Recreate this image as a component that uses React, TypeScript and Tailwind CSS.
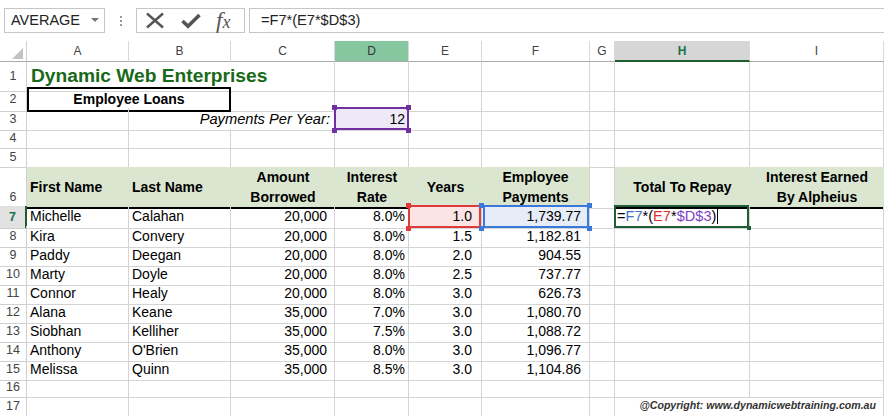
import React from "react";

const GRID =
  "grid grid-cols-[27px_102px_102px_104px_74px_73px_108px_25px_135px_134px]";
const C =
  "border-r border-b border-[#d4d4d4] flex items-center overflow-visible whitespace-nowrap";
const RH =
  "border-r border-b border-[#d0d0d0] flex items-center justify-center text-[12.5px] text-[#444]";
const CH =
  "border-r border-[#d9d9d9] border-b border-b-[#ababab] flex items-center justify-center text-[12px] text-[#444]";

type Row = [string, string, string, string, string, string];

const data: Row[] = [
  ["Kira", "Convery", "20,000", "8.0%", "1.5", "1,182.81"],
  ["Paddy", "Deegan", "20,000", "8.0%", "2.0", "904.55"],
  ["Marty", "Doyle", "20,000", "8.0%", "2.5", "737.77"],
  ["Connor", "Healy", "20,000", "8.0%", "3.0", "626.73"],
  ["Alana", "Keane", "35,000", "7.0%", "3.0", "1,080.70"],
  ["Siobhan", "Kelliher", "35,000", "7.5%", "3.0", "1,088.72"],
  ["Anthony", "O'Brien", "35,000", "8.0%", "3.0", "1,096.77"],
  ["Melissa", "Quinn", "35,000", "8.5%", "3.0", "1,104.86"],
];

function Corners({ color }: { color: string }) {
  const sq = "absolute w-[5px] h-[5px]";
  return (
    <>
      <span className={`${sq} -left-[3px] -top-[3px]`} style={{ background: color }} />
      <span className={`${sq} -right-[3px] -top-[3px]`} style={{ background: color }} />
      <span className={`${sq} -left-[3px] -bottom-[3px]`} style={{ background: color }} />
      <span className={`${sq} -right-[3px] -bottom-[3px]`} style={{ background: color }} />
    </>
  );
}

function Blank({ n, h }: { n: number; h: string }) {
  return (
    <div className={`${GRID} ${h}`}>
      <div className={RH}>{n}</div>
      <div className={C} />
      <div className={C} />
      <div className={C} />
      <div className={C} />
      <div className={C} />
      <div className={C} />
      <div className={C} />
      <div className={C} />
      <div className={C} />
    </div>
  );
}

export default function App() {
  return (
    <div className="w-[884px] h-[416px] overflow-hidden bg-white font-['Liberation_Sans',Arial,sans-serif] text-black text-[14px]">
      {/* Formula bar */}
      <div className="h-[41px] pt-[8px] flex items-start">
        <div className="ml-[4px] w-[101px] h-[25px] border border-[#c6c6c6] flex items-center justify-between pl-[6px] pr-[5px]">
          <span className="text-[14.5px] text-[#222]">AVERAGE</span>
          <svg width="8" height="5" viewBox="0 0 8 5">
            <polygon points="0,0 8,0 4,4" fill="#777" />
          </svg>
        </div>
        <div className="w-[31px] h-[25px] flex flex-col items-center justify-center gap-[2px]">
          <span className="w-[2px] h-[2px] bg-[#999]" />
          <span className="w-[2px] h-[2px] bg-[#999]" />
          <span className="w-[2px] h-[2px] bg-[#999]" />
        </div>
        <div className="w-[109px] h-[25px] border border-[#c6c6c6] flex items-center">
          <svg className="ml-[8px]" width="20" height="17" viewBox="0 0 20 17">
            <path d="M2 1.5 L18 15.5 M18 1.5 L2 15.5" stroke="#555" strokeWidth="2.4" />
          </svg>
          <svg className="ml-[16px]" width="20" height="16" viewBox="0 0 20 16">
            <path d="M1.5 8 L7 13.2 L18.5 2" stroke="#555" strokeWidth="3.6" fill="none" />
          </svg>
          <span className="ml-[15px] font-['Liberation_Serif',serif] italic text-[23px] leading-none text-[#555] -mt-[1px]">
            f<span className="text-[18px]">x</span>
          </span>
        </div>
        <div className="ml-[4px] flex-1 -mr-[2px] h-[25px] border border-[#c6c6c6] flex items-center pl-[11px] text-[14.6px] text-[#222]">
          =F7*(E7*$D$3)
        </div>
      </div>

      {/* Column headers */}
      <div className={`${GRID} h-[21px]`}>
        <div className="border-r border-[#d0d0d0] border-b border-b-[#ababab] flex items-end justify-end pr-[3px] pb-[2px]">
          <svg width="11" height="11" viewBox="0 0 11 11">
            <polygon points="11,0 11,11 0,11" fill="#c3c3c3" />
          </svg>
        </div>
        <div className={CH}>A</div>
        <div className={CH}>B</div>
        <div className={CH}>C</div>
        <div className="border-r border-[#d9d9d9] border-b border-b-[#ababab] flex items-center justify-center text-[12px] text-[#333] bg-[#86c79f]">
          D
        </div>
        <div className={CH}>E</div>
        <div className={CH}>F</div>
        <div className={CH}>G</div>
        <div className="border-r border-[#d9d9d9] border-b-2 border-b-[#1e5e30] flex items-center justify-center text-[12px] font-bold text-[#217346] bg-[#d6d6d6]">
          H
        </div>
        <div className={CH}>I</div>
      </div>

      {/* Row 1 */}
      <div className={`${GRID} h-[25px]`}>
        <div className={RH}>1</div>
        <div className={`${C} col-span-3 pl-[4px] text-[19.2px] font-bold text-[#176a17]`}>
          Dynamic Web Enterprises
        </div>
        <div className={C} />
        <div className={C} />
        <div className={C} />
        <div className={C} />
        <div className={C} />
        <div className={C} />
      </div>

      {/* Row 2 */}
      <div className={`${GRID} h-[21px]`}>
        <div className={RH}>2</div>
        <div className="col-span-2 border-2 border-black flex items-center justify-center font-bold text-[14px]">
          Employee Loans
        </div>
        <div className={C} />
        <div className={C} />
        <div className={C} />
        <div className={C} />
        <div className={C} />
        <div className={C} />
        <div className={C} />
      </div>

      {/* Row 3 */}
      <div className={`${GRID} h-[21px]`}>
        <div className={RH}>3</div>
        <div className={C} />
        <div className={`${C} col-span-2 justify-end pr-[4px] italic text-[14.7px]`}>Payments Per Year:</div>
        <div className={`${C} relative justify-end pr-[3px] bg-[#ede9f7]`}>
          <span className="absolute -left-[1px] -top-[1px] -right-[1px] bottom-0 border-2 border-[#7030a0]" />
          <Corners color="#7030a0" />
          <span className="relative">12</span>
        </div>
        <div className={C} />
        <div className={C} />
        <div className={C} />
        <div className={C} />
        <div className={C} />
      </div>

      <Blank n={4} h="h-[19px]" />
      <Blank n={5} h="h-[19px]" />

      {/* Row 6 */}
      <div className={`${GRID} h-[39px] font-bold text-[14px] leading-[20px]`}>
        <div className={`${RH} items-end pb-[1px] font-normal`}>6</div>
        <div className="bg-[#dae6d0] border-b-2 border-black flex items-center pl-[3px]">First Name</div>
        <div className="bg-[#dae6d0] border-b-2 border-black flex items-center pl-[3px]">Last Name</div>
        <div className="bg-[#dae6d0] border-b-2 border-black flex flex-col items-center justify-center text-center">
          <span>Amount</span>
          <span>Borrowed</span>
        </div>
        <div className="bg-[#dae6d0] border-b-2 border-black flex flex-col items-center justify-center text-center">
          <span>Interest</span>
          <span>Rate</span>
        </div>
        <div className="bg-[#dae6d0] border-b-2 border-black flex items-center justify-center">Years</div>
        <div className="bg-[#dae6d0] border-b-2 border-black border-r border-r-[#d4d4d4] flex flex-col items-center justify-center text-center">
          <span>Employee</span>
          <span>Payments</span>
        </div>
        <div className={C} />
        <div className="bg-[#dae6d0] border-b-2 border-black flex items-center justify-center">Total To Repay</div>
        <div className="bg-[#dae6d0] border-b-2 border-black flex flex-col items-center justify-center text-center">
          <span>Interest Earned</span>
          <span>By Alpheius</span>
        </div>
      </div>

      {/* Row 7 */}
      <div className={`${GRID} h-[20px]`}>
        <div className="border-r-2 border-r-[#1e5e30] border-b border-[#d0d0d0] bg-[#e1e1e1] flex items-center justify-center text-[12.5px] font-bold text-[#217346]">
          7
        </div>
        <div className={`${C} pl-[3px]`}>Michelle</div>
        <div className={`${C} pl-[3px]`}>Calahan</div>
        <div className={`${C} justify-end pr-[7px]`}>20,000</div>
        <div className={`${C} justify-end pr-[3px]`}>8.0%</div>
        <div className={`${C} relative justify-end pr-[9px] bg-[#fce4e4]`}>
          <span className="absolute -left-[1px] -top-[1px] right-0 bottom-0 border-2 border-[#e03b3b]" />
          <Corners color="#e03b3b" />
          <span className="relative">1.0</span>
        </div>
        <div className={`${C} relative justify-end pr-[8px] bg-[#e6ecf8]`}>
          <span className="absolute left-[1px] -top-[1px] right-0 bottom-0 border-2 border-[#3b78dc]" />
          <Corners color="#3b78dc" />
          <span className="relative">1,739.77</span>
        </div>
        <div className={C} />
        <div className={`${C} relative pl-[2px] text-[14.6px]`}>
          <span className="absolute -left-[1px] -top-[1px] right-0 bottom-0 border-2 border-[#1f5e36]" />
          <span className="absolute -right-[2px] -bottom-[2px] w-[4px] h-[4px] bg-[#1f5e36]" />
          <span className="relative flex items-center">
            <span>=</span>
            <span className="text-[#4472c4]">F7</span>
            <span>*(</span>
            <span className="text-[#e03030]">E7</span>
            <span>*</span>
            <span className="text-[#7b3fbf]">$D$3</span>
            <span>)</span>
            <span className="ml-[1px] w-[1px] h-[15px] bg-black" />
          </span>
        </div>
        <div className={C} />
      </div>

      {/* Rows 8-15 */}
      {data.map((r, i) => (
        <div key={i} className={`${GRID} h-[19px]`}>
          <div className={RH}>{i + 8}</div>
          <div className={`${C} pl-[3px]`}>{r[0]}</div>
          <div className={`${C} pl-[3px]`}>{r[1]}</div>
          <div className={`${C} justify-end pr-[7px]`}>{r[2]}</div>
          <div className={`${C} justify-end pr-[3px]`}>{r[3]}</div>
          <div className={`${C} justify-end pr-[9px]`}>{r[4]}</div>
          <div className={`${C} justify-end pr-[8px]`}>{r[5]}</div>
          <div className={C} />
          <div className={C} />
          <div className={C} />
        </div>
      ))}

      <Blank n={16} h="h-[19px]" />

      {/* Row 17 */}
      <div className={`${GRID} h-[19px]`}>
        <div className={RH}>17</div>
        <div className={C} />
        <div className={C} />
        <div className={C} />
        <div className={C} />
        <div className={C} />
        <div className={C} />
        <div className={C} />
        <div className={`${C} col-span-2 justify-end pr-[7px] font-bold italic text-[10.6px] text-[#333]`}>
          @Copyright: www.dynamicwebtraining.com.au
        </div>
      </div>
    </div>
  );
}
